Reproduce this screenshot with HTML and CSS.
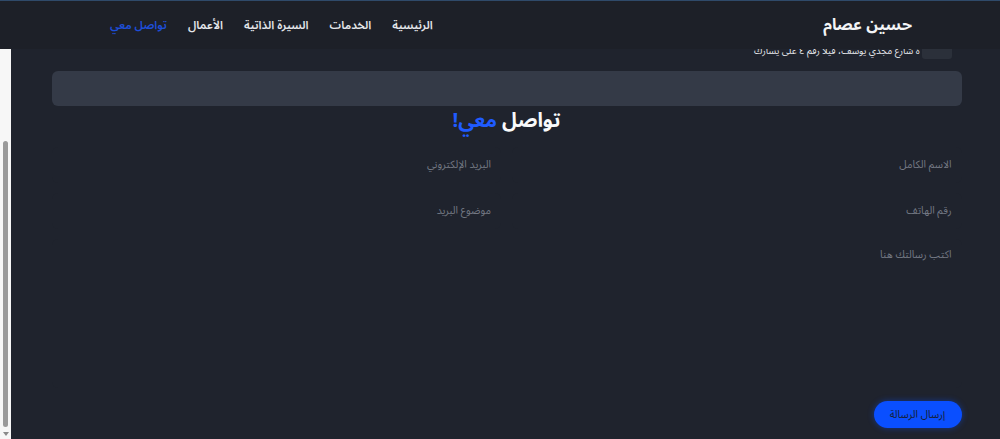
FILE: index.html
```html
<!DOCTYPE html>
<html lang="ar" dir="rtl">
<head>
<meta charset="utf-8">
<title>حسين عصام - تواصل معي</title>
<link rel="stylesheet" href="styles.css">
</head>
<body>
  <header class="site-header">
    <div class="header-inner">
      <a class="brand" href="#">حسين عصام</a>
      <nav class="nav">
        <a href="#">الرئيسية</a>
        <a href="#">الخدمات</a>
        <a href="#">السيرة الذاتية</a>
        <a href="#">الأعمال</a>
        <a class="active" href="#">تواصل معي</a>
      </nav>
    </div>
  </header>

  <div class="scrollbar"><span class="thumb"></span><span class="arrow"></span></div>

  <main class="page">
    <section class="contact">
      <div class="info-row">
        <span class="info-icon"></span>
        <span class="info-text">ة شارع مجدي يوسف، فيلا رقم ٤ على يسارك</span>
      </div>
      <div class="map-card"></div>

      <h2 class="title">تواصل <span class="accent">معي!</span></h2>

      <form class="form">
        <div class="grid">
          <input class="field" type="text" placeholder="الاسم الكامل">
          <input class="field" type="email" placeholder="البريد الإلكتروني">
          <input class="field" type="tel" placeholder="رقم الهاتف">
          <input class="field" type="text" placeholder="موضوع البريد">
        </div>
        <textarea class="field message" placeholder="اكتب رسالتك هنا"></textarea>
        <button class="send" type="button">إرسال الرسالة</button>
      </form>
    </section>
  </main>
</body>
</html>
```
FILE: styles.css
```css
* { box-sizing: border-box; }

html, body {
  margin: 0;
  height: 100%;
  overflow: hidden;
}

body {
  background: #1f232d;
  color: #e5e7eb;
  font-family: "Noto Sans Arabic", "Noto Sans", "DejaVu Sans", sans-serif;
  direction: rtl;
  padding-top: 49px;
}

/* fixed top bar */
.site-header {
  position: fixed;
  top: 0;
  left: 0;
  right: 0;
  height: 49px;
  background: #1d2028;
  border-top: 1px solid #2f4a6a;
  z-index: 10;
}

.header-inner {
  height: 100%;
  display: flex;
  align-items: center;
  justify-content: space-between;
  padding: 0 88px 0 110px;
}

.brand {
  color: #f3f4f6;
  font-size: 16px;
  font-weight: 700;
  text-decoration: none;
}

.nav {
  display: flex;
  gap: 21px;
}

.nav a {
  color: #e5e7eb;
  font-size: 11.5px;
  font-weight: 600;
  text-decoration: none;
}

.nav a.active { color: #1d4ed8; }

/* window scrollbar on the left side of an rtl page */
.scrollbar {
  position: fixed;
  left: 0;
  top: 49px;
  bottom: 0;
  width: 11px;
  background: #f7f7f7;
  z-index: 5;
}

.scrollbar .thumb {
  position: absolute;
  left: 3px;
  top: 92px;
  width: 5px;
  height: 286px;
  border-radius: 3px;
  background: #9a9a9a;
}

.scrollbar .arrow {
  position: absolute;
  left: 3px;
  bottom: 3px;
  width: 0;
  height: 0;
  border-left: 3px solid transparent;
  border-right: 3px solid transparent;
  border-top: 4px solid #8a8a8a;
}

/* visible area under the bar; content above it is scrolled out of view */
.page {
  height: 100%;
  overflow: hidden;
  margin-left: 11px;
  padding: 0 38px 0 40px;
}

.contact {
  max-width: 910px;
  margin: -11px auto 0;
}

.info-row {
  display: flex;
  align-items: flex-end;
  gap: 2px;
  height: 22px;
  padding-right: 10px;
}

.info-icon {
  width: 30px;
  height: 20px;
  margin-bottom: 1px;
  border-radius: 3px;
  background: #2b303a;
}

.info-text {
  font-size: 9.5px;
  line-height: 12px;
  margin-bottom: 3px;
  color: #e5e7eb;
}

.map-card {
  margin-top: 11px;
  height: 35px;
  border-radius: 6px;
  background: #343a47;
}

.title {
  margin: 0;
  text-align: center;
  font-size: 20px;
  font-weight: 700;
  line-height: 30px;
  color: #f9fafb;
}

.title .accent { color: #1f5bff; }

.form {
  margin-top: 11px;
  display: flex;
  flex-direction: column;
}

.grid {
  display: grid;
  grid-template-columns: 1fr 1fr;
  gap: 10px 11px;
}

.field {
  display: block;
  width: 100%;
  height: 36px;
  padding: 0 10px;
  border: 0;
  outline: none;
  border-radius: 6px;
  background: #1f232d;
  color: #e5e7eb;
  font-family: inherit;
  font-size: 10.5px;
  direction: rtl;
}

.field::placeholder { color: #737883; }

.message {
  margin-top: 10px;
  height: 149px;
  padding: 5px 10px 10px;
  resize: none;
}

.send {
  align-self: flex-start;
  margin-top: 13px;
  width: 88px;
  height: 27px;
  border: 0;
  border-radius: 14px;
  background: #0a4fff;
  color: #172033;
  font-family: inherit;
  font-size: 10.5px;
  box-shadow: 0 0 6px rgba(10, 79, 255, 0.45);
}
```
